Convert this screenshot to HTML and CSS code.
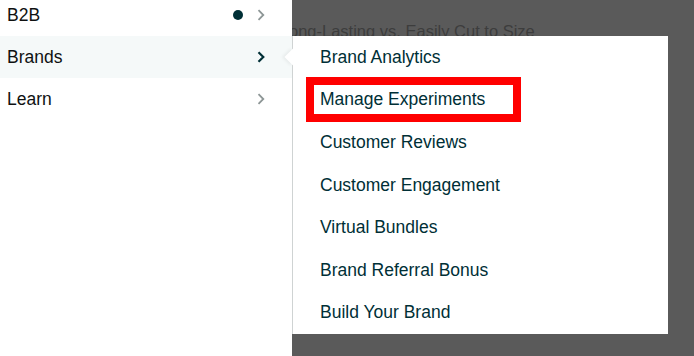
FILE: index.html
```html
<!DOCTYPE html>
<html>
<head>
<meta charset="utf-8">
<link rel="stylesheet" href="styles.css">
</head>
<body>
<div class="page">
  <p class="bgtext">Built to Be Long-Lasting vs. Easily Cut to Size</p>
  <nav class="menu">
    <ul class="main">
      <li class="row"><span class="label">B2B</span><span class="dot"></span><svg class="chev" width="8" height="12" viewBox="0 0 8 12"><path d="M1.5 1.2 L6.3 6 L1.5 10.8" fill="none" stroke="currentColor" stroke-width="1.8"/></svg></li>
      <li class="row active"><span class="label">Brands</span><svg class="chev" width="8" height="12" viewBox="0 0 8 12"><path d="M1.5 1.2 L6.3 6 L1.5 10.8" fill="none" stroke="currentColor" stroke-width="2.2"/></svg></li>
      <li class="row"><span class="label">Learn</span><svg class="chev" width="8" height="12" viewBox="0 0 8 12"><path d="M1.5 1.2 L6.3 6 L1.5 10.8" fill="none" stroke="currentColor" stroke-width="1.8"/></svg></li>
    </ul>
    <div class="sub">
      <span class="pointer"></span>
      <ul class="sublist">
        <li>Brand Analytics</li>
        <li>Manage Experiments</li>
        <li>Customer Reviews</li>
        <li>Customer Engagement</li>
        <li>Virtual Bundles</li>
        <li>Brand Referral Bonus</li>
        <li>Build Your Brand</li>
      </ul>
      <span class="highlight"></span>
    </div>
  </nav>
</div>
</body>
</html>
```
FILE: styles.css
```css
* { box-sizing: border-box; }
html, body { margin: 0; padding: 0; }
body {
  background: #5a5a5a;
  font-family: "Liberation Sans", Arial, sans-serif;
  overflow: hidden;
}
.page {
  position: relative;
  width: 694px;
  height: 356px;
}
.bgtext {
  margin: 0;
  padding: 21px 0 0 200px;
  font-size: 16.5px;
  line-height: 20px;
  color: #3d3d3d;
  white-space: nowrap;
}
.menu {
  position: absolute;
  left: 0;
  top: 0;
  width: 668px;
  height: 356px;
}
.main {
  list-style: none;
  margin: -6px 0 0 0;
  padding: 0;
  width: 292px;
  height: 362px;
  background: #ffffff;
}
.row {
  display: flex;
  align-items: center;
  height: 42px;
  padding: 0 27px 0 7px;
  font-size: 17.5px;
  color: #0f1111;
}
.row .label { flex: 1; }
.row.active { background: #f5f9f9; }
.dot {
  width: 10px;
  height: 10px;
  border-radius: 50%;
  background: #002f36;
  margin-right: 14px;
}
.chev { color: #8d9696; display: block; }
.row.active .chev { color: #002f36; }
.sub {
  position: absolute;
  left: 292px;
  top: 36px;
  width: 376px;
  height: 298px;
  background: #ffffff;
  border-left: 1px solid #cfd3d3;
}
.pointer {
  position: absolute;
  left: -6px;
  top: 15px;
  width: 12px;
  height: 12px;
  background: #ffffff;
  transform: rotate(45deg);
  box-shadow: -2px 2px 3px rgba(0,0,0,0.05);
}
.sublist {
  position: relative;
  list-style: none;
  margin: 0;
  padding: 0;
  display: flex;
  flex-direction: column;
  height: 100%;
}
.sublist li {
  flex: 1;
  display: flex;
  align-items: center;
  padding-left: 27px;
  font-size: 17.5px;
  color: #002f36;
}
.highlight {
  position: absolute;
  left: 13px;
  top: 41px;
  width: 215px;
  height: 45px;
  border: 8px solid #ff0000;
}
```
